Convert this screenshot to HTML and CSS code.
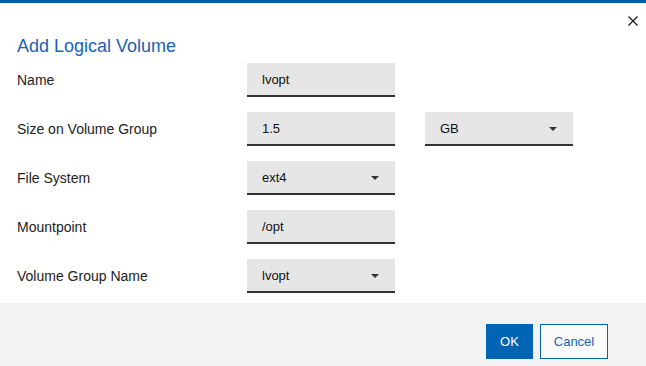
FILE: index.html
```html
<!DOCTYPE html>
<html lang="en">
<head>
  <meta charset="UTF-8" />
  <title>Add Logical Volume</title>
  <link rel="stylesheet" href="styles.css">
</head>
<body>
  <div class="dialog">
    <div class="dialog-top">
      <button class="close-btn" aria-label="Close">
        <svg width="10" height="10" viewBox="0 0 10 10"><path d="M0.5 0.5 L9.5 9.5 M9.5 0.5 L0.5 9.5" stroke="#222" stroke-width="1.4" fill="none"/></svg>
      </button>
    </div>
    <h1 class="title">Add Logical Volume</h1>

    <div class="form">
      <label class="label">Name</label>
      <div class="field">lvopt</div>
      <div></div><div></div>

      <label class="label">Size on Volume Group</label>
      <div class="field">1.5</div>
      <div></div>
      <div class="field select">GB<span class="caret"></span></div>

      <label class="label">File System</label>
      <div class="field select">ext4<span class="caret"></span></div>
      <div></div><div></div>

      <label class="label">Mountpoint</label>
      <div class="field">/opt</div>
      <div></div><div></div>

      <label class="label">Volume Group Name</label>
      <div class="field select">lvopt<span class="caret"></span></div>
      <div></div><div></div>
    </div>

    <div class="footer">
      <button class="btn btn-primary">OK</button>
      <button class="btn btn-secondary">Cancel</button>
    </div>
  </div>
</body>
</html>
```

FILE: styles.css
```css
* {
  box-sizing: border-box;
}

body {
  margin: 0;
  font-family: 'Liberation Sans', Arial, sans-serif;
  color: #222;
  background: #fff;
}

.dialog {
  width: 646px;
  height: 366px;
  border-top: 3px solid #0b5fa8;
  display: flex;
  flex-direction: column;
}

.dialog-top {
  display: flex;
  justify-content: flex-end;
  padding: 13px 8px 0 0;
  height: 30px;
}

.close-btn {
  background: none;
  border: none;
  padding: 0;
  width: 10px;
  height: 10px;
  margin-right: 0;
  cursor: pointer;
  display: flex;
}

.title {
  margin: 3px 0 0 17px;
  font-size: 18px;
  font-weight: normal;
  color: #1b62b6;
  line-height: 20px;
  height: 20px;
}

.form {
  display: grid;
  grid-template-columns: 230px 148px 30px 148px;
  grid-auto-rows: 34px;
  row-gap: 15px;
  margin: 7px 0 0 17px;
  align-items: center;
}

.label {
  font-size: 14px;
  color: #222;
}

.field {
  height: 34px;
  background: #e6e6e6;
  border-bottom: 2px solid #333;
  font-size: 13px;
  color: #111;
  display: flex;
  align-items: center;
  padding: 0 15px;
  position: relative;
}

.select .caret {
  position: absolute;
  right: 16px;
  top: 15px;
  width: 0;
  height: 0;
  border-left: 4px solid transparent;
  border-right: 4px solid transparent;
  border-top: 4px solid #333;
}

.footer {
  margin-top: auto;
  height: 63px;
  background: #f2f2f2;
  display: flex;
  justify-content: flex-end;
  align-items: flex-start;
  gap: 7px;
  padding: 21px 38px 0 0;
}

.btn {
  height: 35px;
  font-family: 'Liberation Sans', Arial, sans-serif;
  font-size: 13px;
  cursor: pointer;
  padding: 0;
}

.btn-primary {
  width: 47px;
  background: #0064b4;
  color: #fff;
  border: none;
}

.btn-secondary {
  width: 68px;
  background: #fafafa;
  color: #1b62b6;
  border: 1.5px solid #0064b4;
}
```
